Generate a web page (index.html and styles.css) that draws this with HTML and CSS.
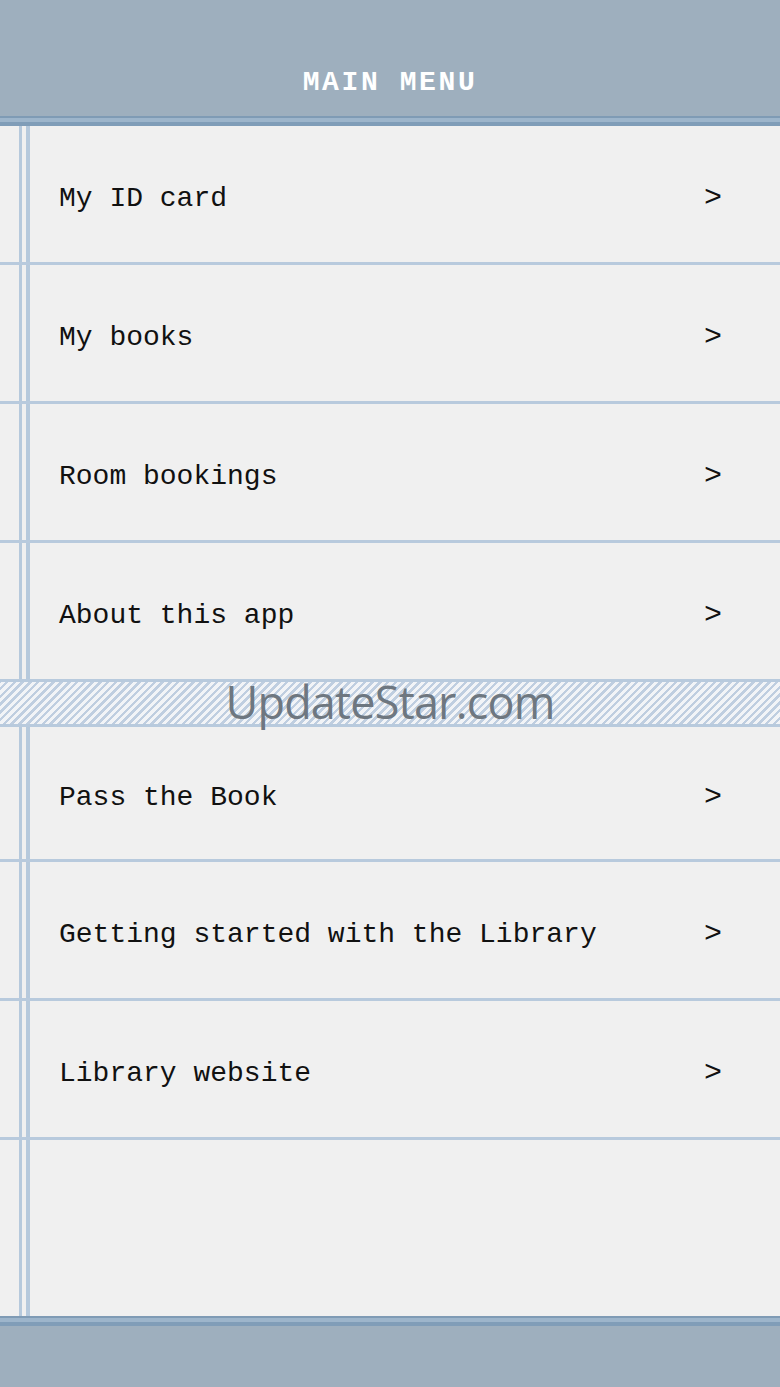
FILE: index.html
```html
<!DOCTYPE html>
<html lang="en">
<head>
    <title>Main Menu</title>
    <link rel="stylesheet" href="styles.css">
</head>
<body>
    <div class="screen">
        <header class="topbar">
            <h1>MAIN MENU</h1>
        </header>
        <div class="band"></div>

        <!-- Menu list -->
        <main class="menu">
            <a class="item" href="#">My ID card <span class="go">&gt;</span></a>
            <a class="item" href="#">My books <span class="go">&gt;</span></a>
            <a class="item" href="#">Room bookings <span class="go">&gt;</span></a>
            <a class="item" href="#">About this app <span class="go">&gt;</span></a>
            <div class="stamp"><span>UpdateStar.com</span></div>
            <a class="item short" href="#">Pass the Book <span class="go">&gt;</span></a>
            <a class="item" href="#">Getting started with the Library <span class="go">&gt;</span></a>
            <a class="item" href="#">Library website <span class="go">&gt;</span></a>
        </main>

        <div class="band"></div>
        <footer class="bottombar"></footer>
    </div>
</body>
</html>
```

FILE: styles.css
```css
body {
    margin: 0;
    background-color: #f0f0f0;
    font-family: "Liberation Mono", "Courier New", monospace;
    color: #111;
}

.screen {
    display: flex;
    flex-direction: column;
    height: 1387px;
}

.topbar {
    height: 116px;
    background-color: #9eafbe;
    display: flex;
    align-items: center;
    justify-content: center;
}

.topbar h1 {
    margin: 48px 0 0 0;
    font-size: 28px;
    letter-spacing: 2.6px;
    font-weight: bold;
    color: #fff;
}

.band {
    height: 10px;
    background: linear-gradient(#7f9bb5 0, #7f9bb5 2px, #9db5cb 2px, #9db5cb 6px, #809db8 6px);
}

.menu {
    flex: 1;
    display: flex;
    flex-direction: column;
    background:
        linear-gradient(90deg, transparent 19px, #b6c9dc 19px, #b6c9dc 22px, transparent 22px,
            transparent 26px, #b6c9dc 26px, #b6c9dc 30px, transparent 30px),
        #f0f0f0;
}

.item {
    box-sizing: border-box;
    height: 139px;
    border-bottom: 3px solid #b8cadd;
    display: flex;
    align-items: center;
    justify-content: space-between;
    padding: 8px 58px 0 59px;
    font-size: 28px;
    color: #111;
    text-decoration: none;
}

.item.short {
    height: 135px;
}

.go {
    font-size: 30px;
}

.stamp {
    height: 42px;
    margin-top: -2px;
    border-top: 2px solid #b8cadd;
    border-bottom: 3px solid #b8cadd;
    background: repeating-linear-gradient(-45deg, #f2f4f7 0, #f2f4f7 3px, #bfcee0 3px, #bfcee0 5.5px);
    display: flex;
    justify-content: center;
    font-family: "Open Sans", "Noto Sans", sans-serif;
    font-size: 45px;
    line-height: 1;
    color: #6e7780;
    letter-spacing: -0.8px;
}

.stamp span {
    margin-top: -3px;
}

.bottombar {
    height: 61px;
    background-color: #9eafbe;
}
```
